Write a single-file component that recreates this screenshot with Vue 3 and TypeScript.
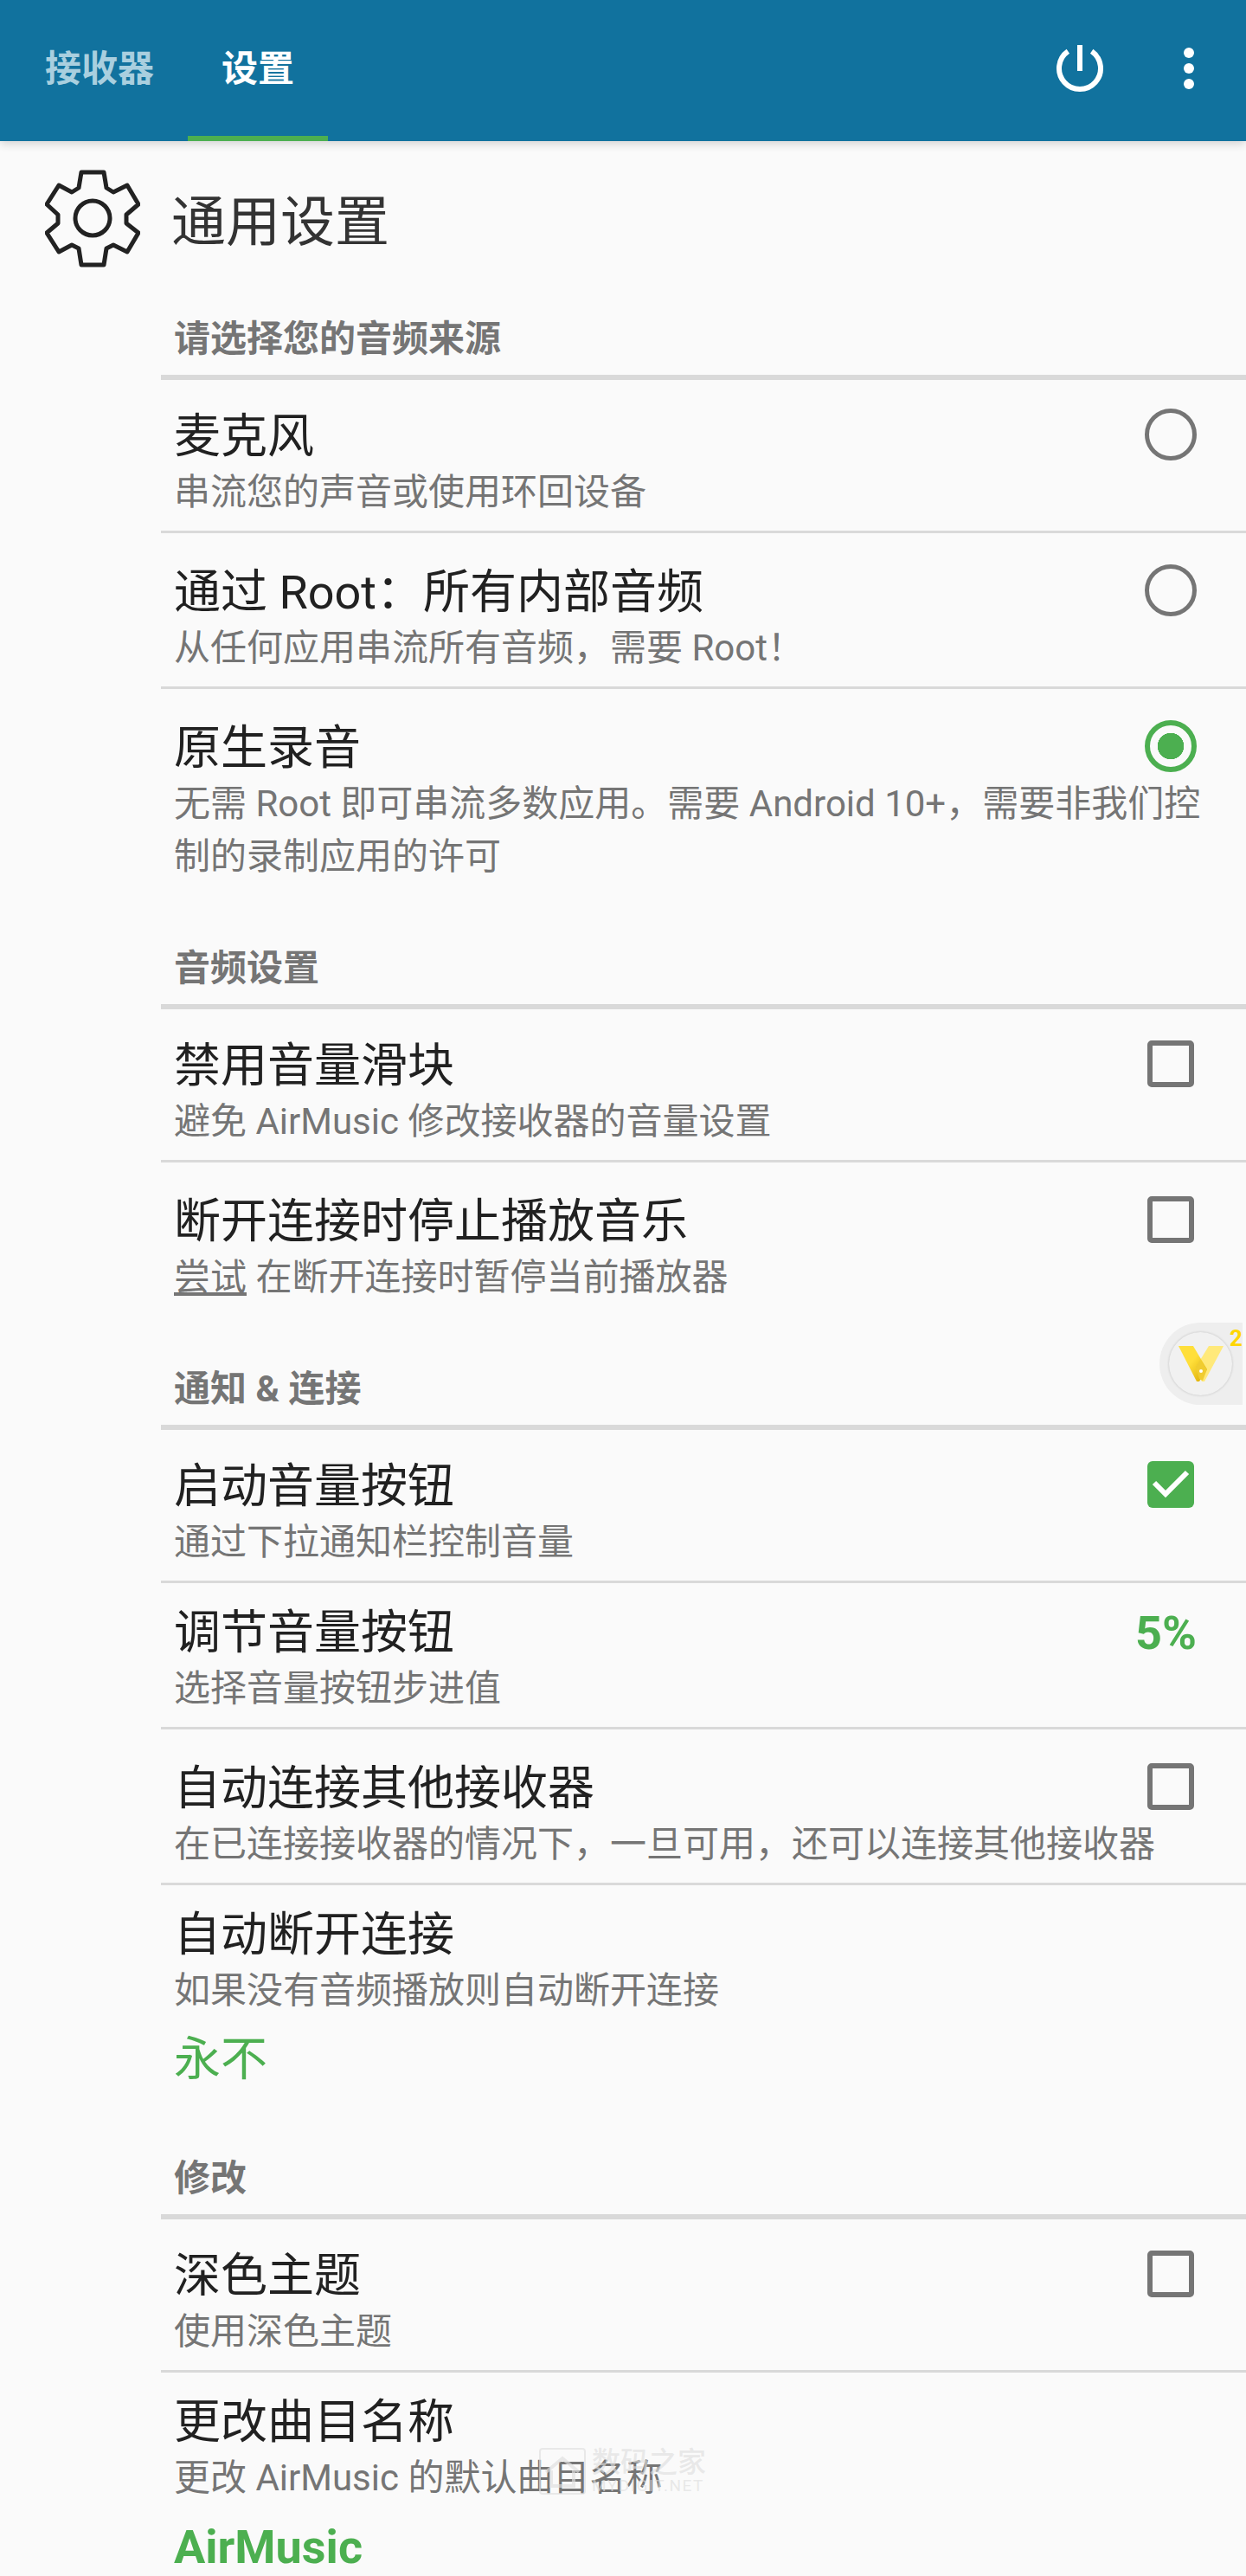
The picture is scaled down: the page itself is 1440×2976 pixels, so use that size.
<template>
    <div class="page">
        <header class="topBar">
            <nav class="tabs">
                <div class="tab">接收器</div>
                <div class="tab active">设置</div>
            </nav>
            <div class="actions">
                <svg width="60" height="60" viewBox="0 0 60 60">
                    <path d="M16.3 7.3 A24 24 0 1 0 43.7 7.3" fill="none" stroke="#fff" stroke-width="6" />
                    <rect x="27" y="0" width="6" height="30" fill="#fff" />
                </svg>
                <svg class="moreIcon" width="12" height="48" viewBox="0 0 12 48">
                    <circle cx="6" cy="6" r="6" fill="#fff" />
                    <circle cx="6" cy="24" r="6" fill="#fff" />
                    <circle cx="6" cy="42" r="6" fill="#fff" />
                </svg>
            </div>
        </header>

        <main class="content">
            <div class="pageTitle">
                <svg width="110" height="113" viewBox="0 0 110 113">
                    <polygon points="42,3 68,3 71,21 79,26 95,18 108,40 94,52 94,62 108,73 95,95 79,87 71,91 68,110 42,110 39,91 31,87 16,95 2,73 15,62 15,52 2,40 16,18 31,26 39,21"
                             fill="none" stroke="#222" stroke-width="5" stroke-linejoin="round" />
                    <circle cx="55" cy="56" r="20" fill="none" stroke="#222" stroke-width="5" />
                </svg>
                <span>通用设置</span>
            </div>

            <section v-for="section in sections" :key="section.title" class="section">
                <div class="sectionTitle">{{ section.title }}</div>
                <div v-for="item in section.items" :key="item.title" class="row" :class="{ tight: item.tight }">
                    <div class="rowTitle">{{ item.title }}</div>
                    <div v-if="item.control === 'radio'" class="radio"></div>
                    <div v-else-if="item.control === 'radioOn'" class="radio on"></div>
                    <div v-else-if="item.control === 'check'" class="check"></div>
                    <svg v-else-if="item.control === 'checkOn'" class="checkOn" width="54" height="54" viewBox="0 0 54 54">
                        <rect width="54" height="54" rx="6" fill="#4caf50" />
                        <path d="M8 25 L21 38 L46 13" fill="none" stroke="#fff" stroke-width="6" />
                    </svg>
                    <div v-else-if="item.control === 'percent'" class="percent">5%</div>
                    <div class="rowSub">
                        <u v-if="item.link">{{ item.link }}</u>{{ item.sub }}
                    </div>
                    <div v-if="item.value" class="rowValue" :class="{ bold: item.boldValue }">{{ item.value }}</div>
                </div>
            </section>
        </main>

        <div class="floatBadge">
            <div class="floatCircle">
                <svg width="52" height="41" viewBox="0 0 52 41">
                    <defs>
                        <linearGradient id="bladeFill" x1="0" y1="0" x2="1" y2="1">
                            <stop offset="0.45" stop-color="#ffdf3a" />
                            <stop offset="1" stop-color="#d9a800" />
                        </linearGradient>
                    </defs>
                    <polygon points="35,0 52,0 30,41 27,41 19,26" fill="#ffe97a" />
                    <polygon points="0,0 17,0 33,27 24,41 21,41" fill="url(#bladeFill)" />
                    <polygon points="20,24 25,16 33,27 28,40 24,38" fill="#f0cc30" />
                    <circle cx="26" cy="29" r="2" fill="#fff" />
                </svg>
            </div>
            <span class="floatNum">2</span>
        </div>

        <div class="watermark">
            <svg width="54" height="54" viewBox="0 0 54 54">
                <rect x="1" y="1" width="52" height="52" rx="3" fill="none" stroke="currentColor" stroke-width="2" />
                <path d="M8 28 L27 12 L46 28 M14 26 V44 H40 V26" fill="none" stroke="currentColor" stroke-width="4" />
            </svg>
            <div>
                <div class="wmCn">数码之家</div>
                <div class="wmEn">MYDIGIT.NET</div>
            </div>
        </div>
    </div>
</template>

<script setup lang="ts">
type Control = 'radio' | 'radioOn' | 'check' | 'checkOn' | 'percent'

interface Item {
    title: string
    sub: string
    link?: string
    value?: string
    boldValue?: boolean
    control?: Control
    tight?: boolean
}

const sections: { title: string; items: Item[] }[] = [
    {
        title: '请选择您的音频来源',
        items: [
            { title: '麦克风', sub: '串流您的声音或使用环回设备', control: 'radio' },
            { title: '通过 Root：所有内部音频', sub: '从任何应用串流所有音频，需要 Root！', control: 'radio' },
            { title: '原生录音', sub: '无需 Root 即可串流多数应用。需要 Android 10+，需要非我们控制的录制应用的许可', control: 'radioOn' },
        ],
    },
    {
        title: '音频设置',
        items: [
            { title: '禁用音量滑块', sub: '避免 AirMusic 修改接收器的音量设置', control: 'check' },
            { title: '断开连接时停止播放音乐', link: '尝试', sub: ' 在断开连接时暂停当前播放器', control: 'check' },
        ],
    },
    {
        title: '通知 & 连接',
        items: [
            { title: '启动音量按钮', sub: '通过下拉通知栏控制音量', control: 'checkOn' },
            { title: '调节音量按钮', sub: '选择音量按钮步进值', control: 'percent', tight: true },
            { title: '自动连接其他接收器', sub: '在已连接接收器的情况下，一旦可用，还可以连接其他接收器', control: 'check' },
            { title: '自动断开连接', sub: '如果没有音频播放则自动断开连接', value: '永不', tight: true },
        ],
    },
    {
        title: '修改',
        items: [
            { title: '深色主题', sub: '使用深色主题', control: 'check' },
            { title: '更改曲目名称', sub: '更改 AirMusic 的默认曲目名称', value: 'AirMusic', boldValue: true, tight: true },
        ],
    },
]
</script>

<style>
body {
    margin: 0;
    background: #fafafa;
}
</style>

<style scoped>
.page {
    position: relative;
    height: 2976px;
    overflow: hidden;
    background: #fafafa;
    font-family: Roboto, "Noto Sans CJK SC", sans-serif;
}

.topBar {
    position: relative;
    height: 163px;
    padding-left: 13px;
    display: flex;
    justify-content: space-between;
    background: #11729e;
    box-shadow: 0 3px 10px rgba(0, 0, 0, 0.16);
}

.tabs {
    display: flex;
}

.tab {
    padding: 0 39px;
    line-height: 160px;
    font-size: 42px;
    font-weight: 700;
    color: #a9cfdf;
}

.tab.active {
    color: #fff;
    border-bottom: 6px solid #4caf50;
    height: 157px;
}

.actions {
    display: flex;
    align-items: flex-start;
    padding-right: 60px;
    padding-top: 52px;
    gap: 90px;
}

.moreIcon {
    margin-top: 3px;
}

.pageTitle {
    height: 113px;
    padding: 33px 0 0 52px;
    margin-bottom: -2px;
    display: flex;
    align-items: center;
    gap: 36px;
    font-size: 63px;
    color: #333;
}

.pageTitle span {
    margin-top: -5px;
}

.section {
    padding-left: 186px;
}

/* the thick rule sits 3px into the first row */
.sectionTitle {
    height: 50px;
    margin: 60px 0 -3px;
    padding: 0 0 16px 15px;
    line-height: 50px;
    font-size: 42px;
    font-weight: 700;
    color: #757575;
    border-bottom: 6px solid #d9d9d9;
}

.row {
    padding: 35px 50px 14px 15px;
    display: grid;
    grid-template-columns: 1fr auto;
    align-items: start;
    border-bottom: 3px solid #d9d9d9;
}

.row:last-child {
    border-bottom: none;
}

.row.tight {
    padding-top: 24px;
}

.rowTitle {
    line-height: 67px;
    font-size: 54px;
    color: #212121;
}

.rowSub {
    grid-column: 1 / -1;
    line-height: 61px;
    font-size: 42px;
    color: #757575;
}

.rowValue {
    grid-column: 1 / -1;
    margin: 18px 0 6px;
    line-height: 64px;
    font-size: 54px;
    color: #4caf50;
}

.rowValue.bold {
    font-weight: 700;
}

.radio {
    width: 60px;
    height: 60px;
    margin: 1px 7px 0 0;
    box-sizing: border-box;
    border: 5px solid #757575;
    border-radius: 50%;
}

.radio.on {
    border: 6px solid #4caf50;
    background: radial-gradient(circle, #4caf50 0 15px, transparent 15.5px);
}

.check {
    width: 54px;
    height: 54px;
    margin: 4px 10px 0 0;
    box-sizing: border-box;
    border: 6px solid #757575;
    border-radius: 5px;
}

.checkOn {
    margin: 4px 10px 0 0;
}

.percent {
    margin-right: 7px;
    line-height: 67px;
    font-size: 54px;
    font-weight: 700;
    color: #4caf50;
}

.floatBadge {
    position: absolute;
    left: 1340px;
    top: 1528px;
    width: 96px;
    height: 95px;
    border-radius: 48px 0 0 48px;
    background: #eeeeee;
}

.floatCircle {
    position: absolute;
    left: 11px;
    top: 11px;
    width: 73px;
    height: 73px;
    display: flex;
    align-items: center;
    justify-content: center;
    border-radius: 50%;
    background: #f1f1f1;
    box-shadow: 0 0 3px rgba(0, 0, 0, 0.2);
}

.floatNum {
    position: absolute;
    right: 0;
    top: 3px;
    line-height: 30px;
    font-size: 26px;
    font-weight: 700;
    color: #ffd600;
}

.watermark {
    position: absolute;
    left: 623px;
    top: 2828px;
    display: flex;
    gap: 7px;
    color: rgba(222, 222, 222, 0.65);
}

.wmCn {
    line-height: 34px;
    font-size: 33px;
    font-weight: 500;
}

.wmEn {
    line-height: 20px;
    font-size: 19px;
    letter-spacing: 1.5px;
}
</style>
